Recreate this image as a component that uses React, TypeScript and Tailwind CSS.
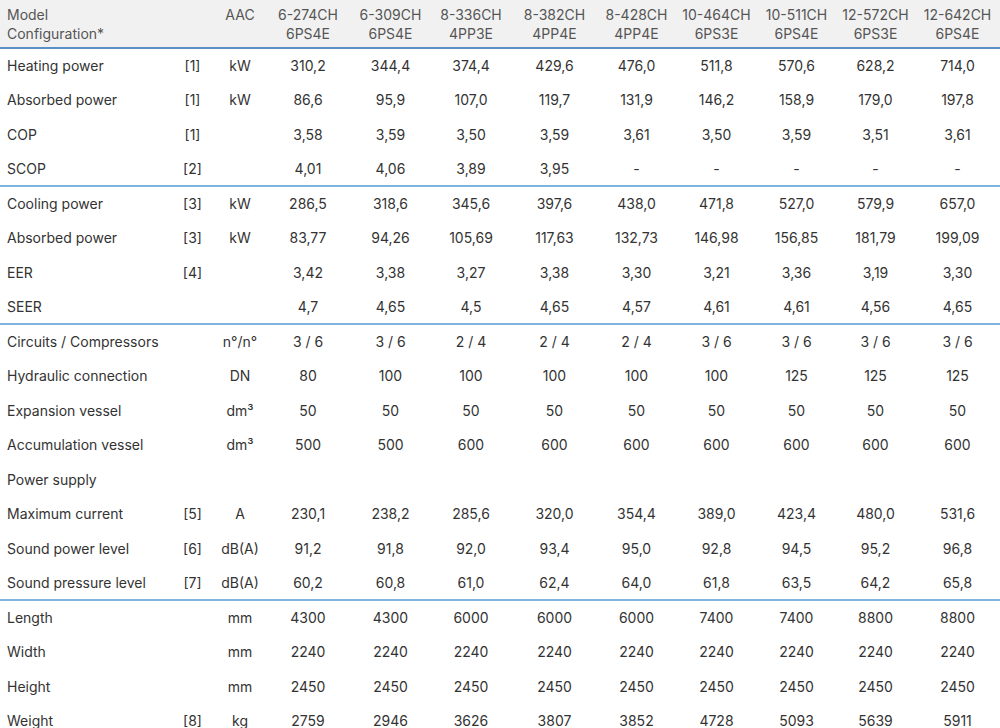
const models = [
  ['6-274CH', '6PS4E'],
  ['6-309CH', '6PS4E'],
  ['8-336CH', '4PP3E'],
  ['8-382CH', '4PP4E'],
  ['8-428CH', '4PP4E'],
  ['10-464CH', '6PS3E'],
  ['10-511CH', '6PS4E'],
  ['12-572CH', '6PS3E'],
  ['12-642CH', '6PS4E'],
];

const colWidths = ['w-[86px]', 'w-[79px]', 'w-[82px]', 'w-[85px]', 'w-[79px]', 'w-[81px]', 'w-[79px]', 'w-[79px]', 'w-[85px]'];

type Row = { label: string; ref?: string; unit?: string; values: string[]; sectionEnd?: boolean };

const rows: Row[] = [
  { label: 'Heating power', ref: '[1]', unit: 'kW', values: ['310,2', '344,4', '374,4', '429,6', '476,0', '511,8', '570,6', '628,2', '714,0'] },
  { label: 'Absorbed power', ref: '[1]', unit: 'kW', values: ['86,6', '95,9', '107,0', '119,7', '131,9', '146,2', '158,9', '179,0', '197,8'] },
  { label: 'COP', ref: '[1]', values: ['3,58', '3,59', '3,50', '3,59', '3,61', '3,50', '3,59', '3,51', '3,61'] },
  { label: 'SCOP', ref: '[2]', values: ['4,01', '4,06', '3,89', '3,95', '-', '-', '-', '-', '-'], sectionEnd: true },
  { label: 'Cooling power', ref: '[3]', unit: 'kW', values: ['286,5', '318,6', '345,6', '397,6', '438,0', '471,8', '527,0', '579,9', '657,0'] },
  { label: 'Absorbed power', ref: '[3]', unit: 'kW', values: ['83,77', '94,26', '105,69', '117,63', '132,73', '146,98', '156,85', '181,79', '199,09'] },
  { label: 'EER', ref: '[4]', values: ['3,42', '3,38', '3,27', '3,38', '3,30', '3,21', '3,36', '3,19', '3,30'] },
  { label: 'SEER', values: ['4,7', '4,65', '4,5', '4,65', '4,57', '4,61', '4,61', '4,56', '4,65'], sectionEnd: true },
  { label: 'Circuits / Compressors', unit: 'n°/n°', values: ['3 / 6', '3 / 6', '2 / 4', '2 / 4', '2 / 4', '3 / 6', '3 / 6', '3 / 6', '3 / 6'] },
  { label: 'Hydraulic connection', unit: 'DN', values: ['80', '100', '100', '100', '100', '100', '125', '125', '125'] },
  { label: 'Expansion vessel', unit: 'dm³', values: ['50', '50', '50', '50', '50', '50', '50', '50', '50'] },
  { label: 'Accumulation vessel', unit: 'dm³', values: ['500', '500', '600', '600', '600', '600', '600', '600', '600'] },
  { label: 'Power supply', values: ['', '', '', '', '', '', '', '', ''] },
  { label: 'Maximum current', ref: '[5]', unit: 'A', values: ['230,1', '238,2', '285,6', '320,0', '354,4', '389,0', '423,4', '480,0', '531,6'] },
  { label: 'Sound power level', ref: '[6]', unit: 'dB(A)', values: ['91,2', '91,8', '92,0', '93,4', '95,0', '92,8', '94,5', '95,2', '96,8'] },
  { label: 'Sound pressure level', ref: '[7]', unit: 'dB(A)', values: ['60,2', '60,8', '61,0', '62,4', '64,0', '61,8', '63,5', '64,2', '65,8'], sectionEnd: true },
  { label: 'Length', unit: 'mm', values: ['4300', '4300', '6000', '6000', '6000', '7400', '7400', '8800', '8800'] },
  { label: 'Width', unit: 'mm', values: ['2240', '2240', '2240', '2240', '2240', '2240', '2240', '2240', '2240'] },
  { label: 'Height', unit: 'mm', values: ['2450', '2450', '2450', '2450', '2450', '2450', '2450', '2450', '2450'] },
  { label: 'Weight', ref: '[8]', unit: 'kg', values: ['2759', '2946', '3626', '3807', '3852', '4728', '5093', '5639', '5911'] },
];

export default function App() {
  return (
    <div className="w-[1000px] bg-white font-['Inter',sans-serif] text-[#333]">
      <table className="w-full table-fixed border-collapse">
        <colgroup>
          <col className="w-[170px]" />
          <col className="w-[45px]" />
          <col className="w-[50px]" />
          {colWidths.map((w, i) => (
            <col key={i} className={w} />
          ))}
        </colgroup>
        <thead>
          <tr className="h-[47px] border-b-2 border-[#5b8fc8] bg-[#f1f1f1] text-[14px] leading-[19px] text-[#555]">
            <th colSpan={2} className="pl-[7px] pt-[5px] pb-[4px] text-left align-top font-normal">
              Model
              <br />
              Configuration*
            </th>
            <th className="pt-[5px] text-center align-top font-normal">AAC</th>
            {models.map(([name, conf]) => (
              <th key={name} className="pt-[5px] pb-[4px] text-center align-top font-normal">
                {name}
                <br />
                {conf}
              </th>
            ))}
          </tr>
        </thead>
        <tbody className="text-[14px]">
          {rows.map((row, i) => (
            <tr
              key={i}
              className={`h-[34.5px] ${row.sectionEnd ? 'border-b-2 border-[#80b3dd]' : ''}`}
            >
              <td className="pl-[7px] whitespace-nowrap">{row.label}</td>
              <td className="text-center">{row.ref}</td>
              <td className="text-center">{row.unit}</td>
              {row.values.map((v, j) => (
                <td key={j} className="text-center">
                  {v}
                </td>
              ))}
            </tr>
          ))}
        </tbody>
      </table>
    </div>
  );
}
